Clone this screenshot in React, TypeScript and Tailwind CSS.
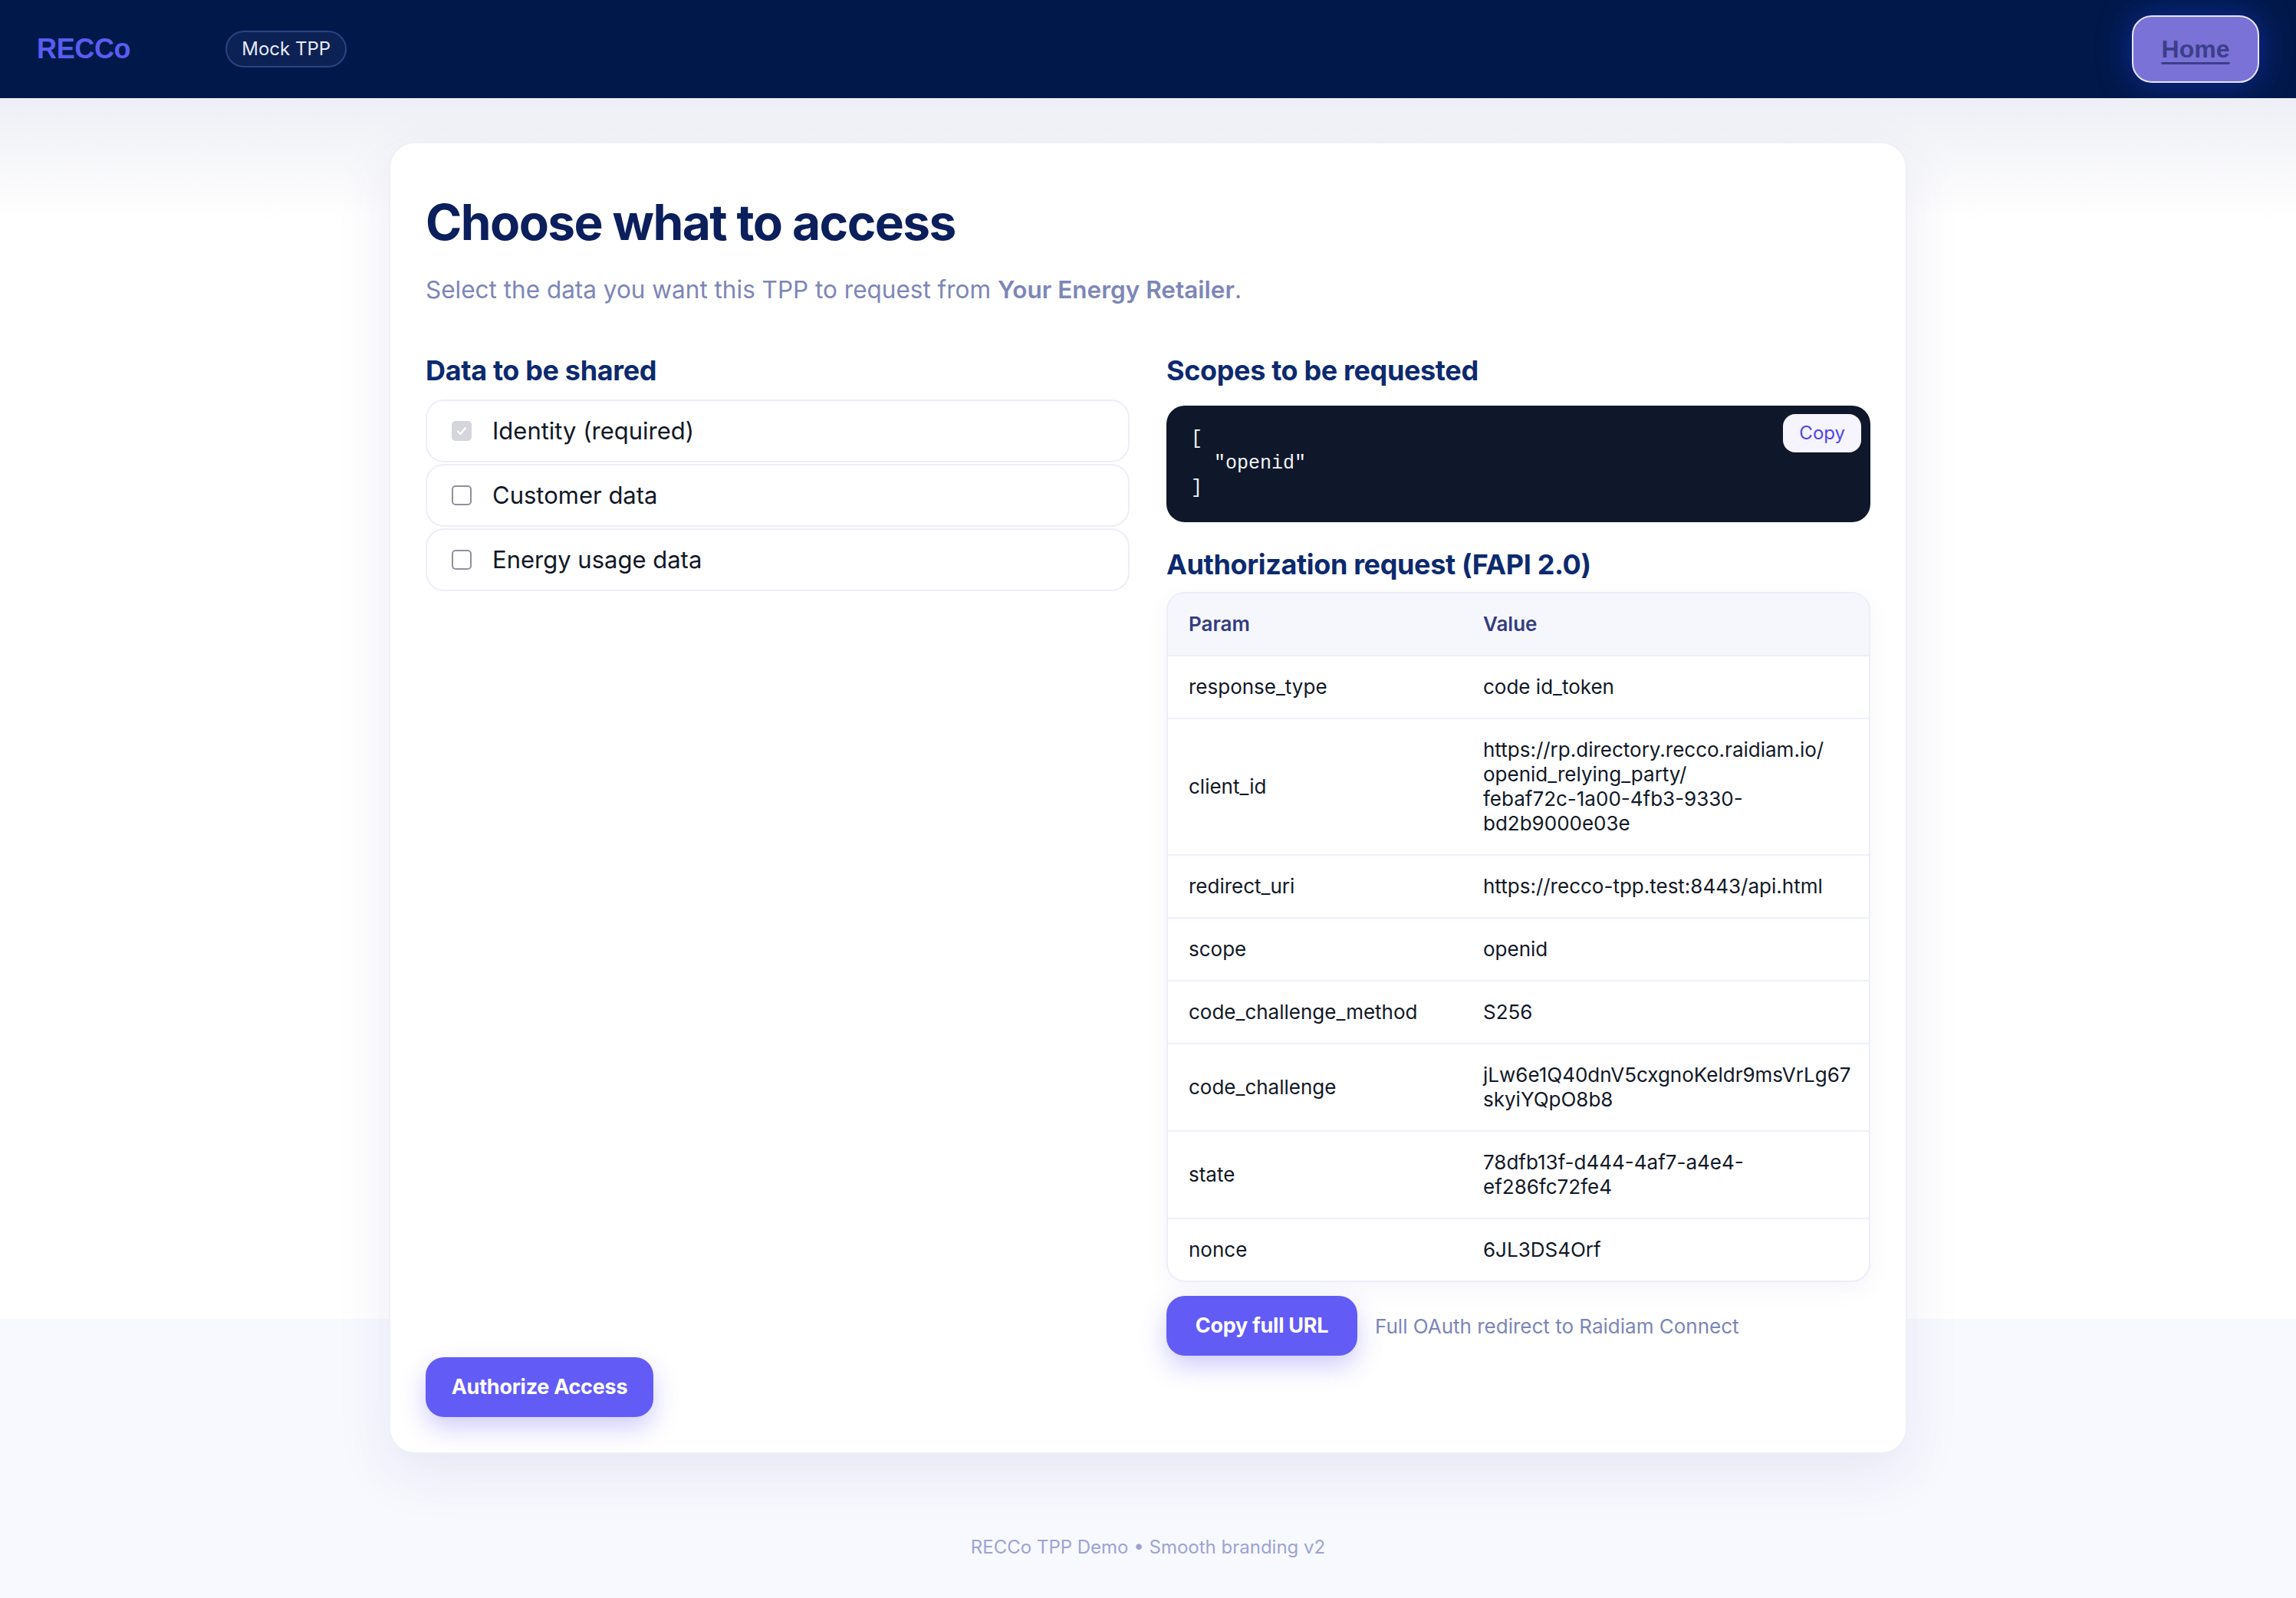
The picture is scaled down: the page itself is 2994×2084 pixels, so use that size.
import React from "react";

const rows: [string, string[]][] = [
  ["response_type", ["code id_token"]],
  [
    "client_id",
    [
      "https://rp.directory.recco.raidiam.io/",
      "openid_relying_party/",
      "febaf72c-1a00-4fb3-9330-",
      "bd2b9000e03e",
    ],
  ],
  ["redirect_uri", ["https://recco-tpp.test:8443/api.html"]],
  ["scope", ["openid"]],
  ["code_challenge_method", ["S256"]],
  ["code_challenge", ["jLw6e1Q40dnV5cxgnoKeldr9msVrLg67", "skyiYQpO8b8"]],
  ["state", ["78dfb13f-d444-4af7-a4e4-", "ef286fc72fe4"]],
  ["nonce", ["6JL3DS4Orf"]],
];

function Check({ checked, disabled }: { checked?: boolean; disabled?: boolean }) {
  if (checked && disabled) {
    return (
      <span className="flex h-[26px] w-[26px] shrink-0 items-center justify-center rounded-[5px] bg-[#d5d6dc]">
        <svg viewBox="0 0 16 16" className="h-[18px] w-[18px]" fill="none">
          <path d="M3.5 8.5l3 3 6-7" stroke="#ffffff" strokeWidth="2" strokeLinecap="round" strokeLinejoin="round" />
        </svg>
      </span>
    );
  }
  return <span className="h-[26px] w-[26px] shrink-0 rounded-[5px] border-2 border-[#8f929c] bg-white" />;
}

export default function App() {
  return (
    <div className="flex min-h-screen flex-col bg-[#f8f9fe] font-['Inter',sans-serif]">
      {/* Header */}
      <header className="flex h-[128px] items-center justify-between bg-[#00194a] px-[48px]">
        <div className="flex items-center gap-[124px]">
          <span className="font-['Liberation_Sans',Arial,sans-serif] text-[36px] font-bold tracking-[-0.01em] text-[#5b5cf0]">
            RECCo
          </span>
          <span className="flex h-[48px] items-center rounded-full border-2 border-[#2c4282] bg-[#0c2255] px-[19px] text-[24px] text-[#e8eaf8]">
            Mock TPP
          </span>
        </div>
        <a
          href="#"
          className="flex h-[88px] w-[166px] items-center justify-center rounded-[26px] border-2 border-[#e6e6f7] bg-[#7a72d6] font-['Liberation_Sans',Arial,sans-serif] text-[32px] font-bold text-[#3b3f8a] underline decoration-[3px] underline-offset-[6px] shadow-[0_0_40px_rgba(30,60,220,0.55)]"
        >
          Home
        </a>
      </header>

      {/* Main */}
      <main className="flex flex-1 flex-col items-center bg-[linear-gradient(to_bottom,#eeeff5_0px,#ffffff_160px,#ffffff_100%)] bg-[length:100%_1592px] bg-no-repeat">
        <section className="mt-[57px] w-[1980px] rounded-[34px] border-2 border-[#eef0f8] bg-white px-[46px] pb-[46px] pt-[64px] shadow-[0_24px_70px_rgba(70,70,160,0.10)]">
          <h1 className="text-[64px] font-bold leading-[77px] tracking-[-0.025em] text-[#0a1f5c]">
            Choose what to access
          </h1>
          <p className="mt-[30px] text-[31.5px] leading-[40px] text-[#7d86b8]">
            Select the data you want this TPP to request from{" "}
            <span className="font-semibold">Your Energy Retailer</span>.
          </p>

          <div className="mt-[63px] grid grid-cols-2 gap-[48px]">
            {/* Left column */}
            <div>
              <h2 className="text-[36px] font-bold leading-[44px] tracking-[-0.01em] text-[#0c2a6e]">
                Data to be shared
              </h2>
              <div className="mt-[16px] flex flex-col gap-[2px]">
                {[
                  { label: "Identity (required)", checked: true, disabled: true },
                  { label: "Customer data" },
                  { label: "Energy usage data" },
                ].map((r) => (
                  <label
                    key={r.label}
                    className="flex h-[82px] items-center gap-[27px] rounded-[24px] border-2 border-[#eceef9] bg-white pl-[32px] text-[31px] text-[#111827]"
                  >
                    <Check checked={r.checked} disabled={r.disabled} />
                    <span>{r.label}</span>
                  </label>
                ))}
              </div>
            </div>

            {/* Right column */}
            <div>
              <h2 className="text-[36px] font-bold leading-[44px] tracking-[-0.01em] text-[#0c2a6e]">
                Scopes to be requested
              </h2>
              <div className="relative mt-[24px] rounded-[24px] bg-[#0f172a] px-[32px] py-[28px] font-['Liberation_Mono',monospace] text-[25px] leading-[32px] text-[#f1f5f9]">
                <pre className="font-['Liberation_Mono',monospace]">{'[\n  "openid"\n]'}</pre>
                <button className="absolute right-[12px] top-[11px] flex h-[50px] items-center rounded-[16px] bg-[#f5f4ff] px-[21px] font-['Inter',sans-serif] text-[24px] text-[#4f46e5]">
                  Copy
                </button>
              </div>

              <h2 className="mt-[33px] text-[36px] font-bold leading-[44px] tracking-[-0.01em] text-[#0c2a6e]">
                Authorization request (FAPI 2.0)
              </h2>
              <div className="mt-[14px] overflow-hidden rounded-[24px] border-2 border-[#eceef9] bg-white shadow-[0_10px_30px_rgba(70,70,160,0.05)]">
                <div className="grid grid-cols-[385px_1fr] border-b-2 border-[#eceef9] bg-[#f6f7fd] text-[26px] font-semibold leading-[32px] text-[#323c7e]">
                  <div className="py-[24px] pl-[27px]">Param</div>
                  <div className="py-[24px] pl-[26px]">Value</div>
                </div>
                {rows.map(([k, v], i) => (
                  <div
                    key={k}
                    className={
                      "grid grid-cols-[385px_1fr] text-[26px] leading-[32px] text-[#111827] " +
                      (i < rows.length - 1 ? "border-b-2 border-[#eef0fa]" : "")
                    }
                  >
                    <div className="flex items-center py-[24px] pl-[27px]">{k}</div>
                    <div className="py-[24px] pl-[26px] pr-[20px]">
                      {v.map((line) => (
                        <div key={line}>{line}</div>
                      ))}
                    </div>
                  </div>
                ))}
              </div>

              <div className="mt-[18px] flex items-center gap-[23px]">
                <button className="flex h-[78px] w-[249px] items-center justify-center rounded-[24px] bg-[#625bf6] text-[27px] font-bold tracking-[-0.01em] text-white shadow-[0_14px_32px_rgba(98,91,246,0.30)]">
                  Copy full URL
                </button>
                <span className="text-[26px] text-[#7b86b8]">Full OAuth redirect to Raidiam Connect</span>
              </div>
            </div>
          </div>

          <button className="mt-[2px] flex h-[78px] w-[297px] items-center justify-center rounded-[24px] bg-[#625bf6] text-[27px] font-bold tracking-[-0.01em] text-white shadow-[0_14px_32px_rgba(98,91,246,0.30)]">
            Authorize Access
          </button>
        </section>

        <footer className="mb-[52px] mt-[104px] text-[24px] text-[#9ba4d2]">
          RECCo TPP Demo • Smooth branding v2
        </footer>
      </main>
    </div>
  );
}
